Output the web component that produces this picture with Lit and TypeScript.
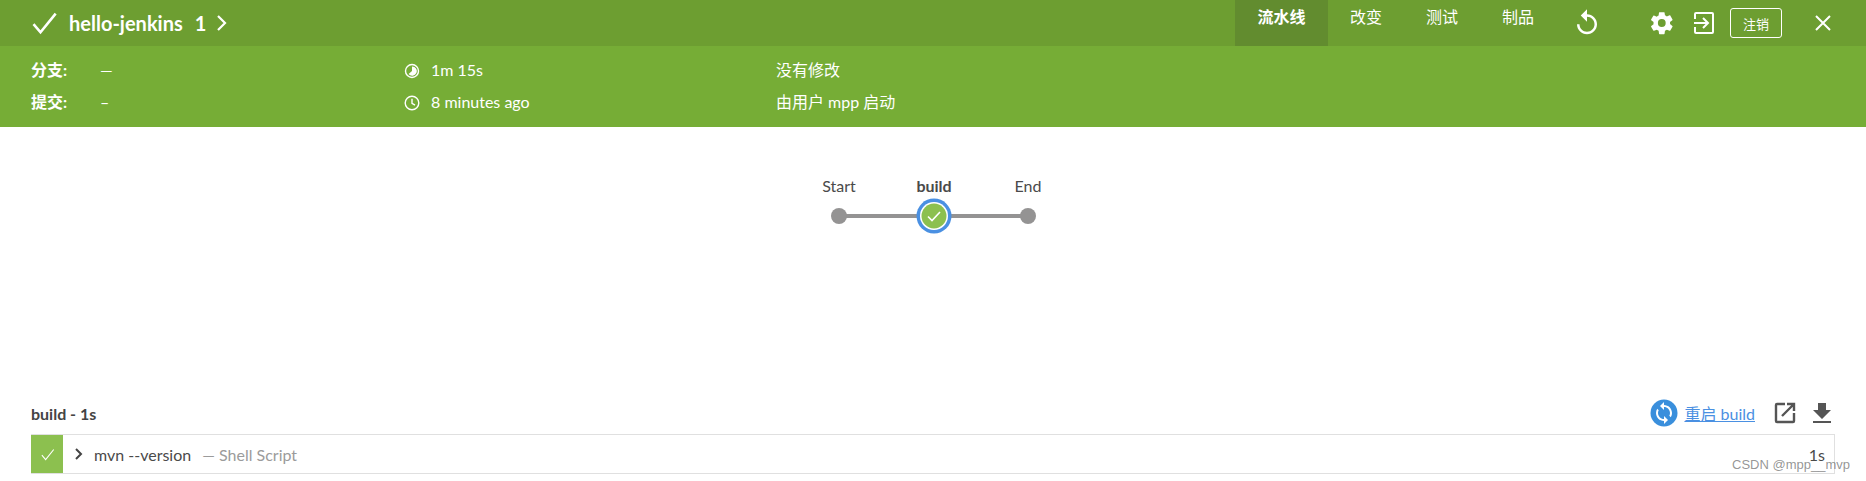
import { LitElement, html, css, svg } from 'lit';
import { customElement } from 'lit/decorators.js';

const check = (size: number, w: number) => html`<svg width=${size} height=${size} viewBox="0 0 24 24" fill="none" stroke="#fff" stroke-width=${w}><path d="M3 13l6 7L22 4"/></svg>`;

@customElement('app-root')
export class AppRoot extends LitElement {
  static styles = css`
    :host {
      display: block;
      position: relative;
      height: 481px;
      overflow: hidden;
      background: #fff;
      font-family: Lato, "Noto Sans CJK SC", sans-serif;
      color: #4a4a4a;
    }
    .top {
      height: 46px;
      background: #6d9e31;
      color: #fff;
      display: flex;
      align-items: center;
      padding-left: 30px;
    }
    .title {
      display: flex;
      align-items: center;
      font-size: 20px;
      font-weight: 700;
      flex: 1;
    }
    .title .name { margin-left: 11px; }
    .title .run { margin-left: 12px; }
    .title svg.chev { margin-left: 10px; }
    .tabs { display: flex; height: 100%; margin-right: 17px; }
    .tab {
      padding: 0 22px;
      font-size: 16px;
      line-height: 34px;
      width: 32px;
      white-space: nowrap;
      display: flex;
      justify-content: center;
    }
    .tab.active {
      width: 49px;
      background: #628c2f;
      font-weight: 700;
    }
    .actions { display: flex; align-items: center; padding-right: 34px; }
    .actions .gear { margin-left: 48px; }
    .actions .exit { margin-left: 18px; }
    .logout {
      width: 52px;
      height: 30px;
      box-sizing: border-box;
      border: 1px solid #fff;
      border-radius: 3px;
      font-size: 13px;
      display: flex;
      align-items: center;
      justify-content: center;
      margin-left: 15px;
      margin-right: 32px;
    }
    .sub {
      height: 81px;
      box-sizing: border-box;
      background: #76ad36;
      color: #fff;
      padding: 7px 0 0 31px;
      display: grid;
      grid-template-columns: 373px 372px 1fr;
      grid-auto-rows: 32px;
      font-size: 16px;
      align-items: center;
    }
    .kv { display: flex; align-items: center; }
    .kv b { width: 69px; font-weight: 700; }
    .meta { display: flex; align-items: center; gap: 11px; }
    .meta svg { margin-top: 3px; }
    .graph { height: 200px; display: flex; justify-content: center; }
    .graph text { font-family: Lato, sans-serif; font-size: 16px; fill: #4a4a4a; text-anchor: middle; }
    .graph text.sel { font-weight: 700; }
    .head {
      display: flex;
      align-items: center;
      height: 40px;
      padding: 0 34px 0 31px;
      margin-top: 66px;
      margin-bottom: 1px;
      box-sizing: border-box;
      font-size: 16px;
    }
    .head .stage { font-weight: 700; flex: 1; color: #444; }
    .head a { color: #4a90e2; text-decoration: underline; margin: 0 19px 0 6px; }
    .head svg.dl { margin-left: 16px; }
    .step {
      margin: 0 31px;
      height: 38px;
      border: 1px solid #e0e0e0;
      border-left: none;
      display: flex;
      align-items: center;
      font-size: 16px;
    }
    .ok {
      width: 32px;
      height: 38px;
      background: #8cc04f;
      display: flex;
      align-items: center;
      justify-content: center;
    }
    .step .chev { margin-left: 11px; }
    .step .cmd { margin-left: 11px; }
    .step .kind { margin-left: 11px; color: #9b9b9b; flex: 1; }
    .step .time { margin-right: 9px; }
    .mark {
      position: absolute;
      right: 16px;
      top: 457px;
      font: 13px "Liberation Sans", sans-serif;
      color: rgba(90, 90, 90, 0.65);
    }
  `;

  render() {
    return html`
      <div class="top">
        <div class="title">
          ${check(28, 2.2)}
          <span class="name">hello-jenkins</span>
          <span class="run">1</span>
          <svg class="chev" width="11" height="18" viewBox="0 0 11 18" fill="none" stroke="#fff" stroke-width="2.2"><path d="M2 2l7 7-7 7"/></svg>
        </div>
        <div class="tabs">
          <div class="tab active">流水线</div>
          <div class="tab">改变</div>
          <div class="tab">测试</div>
          <div class="tab">制品</div>
        </div>
        <div class="actions">
          <svg width="28" height="30" viewBox="2 0 20 24" fill="#fff"><path d="M12 5V1L7 6l5 5V7c3.31 0 6 2.69 6 6s-2.69 6-6 6-6-2.69-6-6H4c0 4.42 3.58 8 8 8s8-3.58 8-8-3.58-8-8-8z"/></svg>
          <svg class="gear" width="26" height="26" viewBox="0 0 24 24" fill="#fff"><path d="M19.4 13c.04-.33.06-.66.06-1s-.02-.67-.07-1l2.16-1.65c.2-.15.25-.42.13-.64l-2.05-3.55c-.13-.22-.39-.3-.62-.22l-2.55 1.02c-.53-.4-1.1-.74-1.73-1l-.38-2.7A.5.5 0 0 0 13.85 2h-4.1a.5.5 0 0 0-.5.42l-.38 2.71c-.63.26-1.2.6-1.73 1L4.6 5.1a.5.5 0 0 0-.61.22L1.94 8.87c-.13.22-.07.49.13.64L4.23 11.16c-.05.33-.08.67-.08 1s.03.67.07 1l-2.15 1.65c-.2.15-.25.42-.13.64l2.05 3.55c.13.22.39.3.62.22l2.55-1.02c.53.4 1.1.74 1.73 1l.38 2.7c.05.24.25.42.5.42h4.1c.25 0 .46-.18.5-.42l.38-2.7c.63-.27 1.2-.6 1.73-1l2.55 1.02c.23.09.49 0 .62-.22l2.05-3.55c.12-.22.07-.49-.13-.64zM11.8 15.6a3.6 3.6 0 1 1 0-7.2 3.6 3.6 0 0 1 0 7.2z"/></svg>
          <svg class="exit" width="22" height="24" viewBox="0 0 22 24" fill="none" stroke="#fff" stroke-width="2"><path d="M2 8V3a1 1 0 0 1 1-1h16a1 1 0 0 1 1 1v18a1 1 0 0 1-1 1H3a1 1 0 0 1-1-1v-5"/><path d="M1 12h13M10 7l5 5-5 5"/></svg>
          <div class="logout">注销</div>
          <svg width="18" height="18" viewBox="0 0 18 18" fill="none" stroke="#fff" stroke-width="2"><path d="M2 2l14 14M16 2L2 16"/></svg>
        </div>
      </div>

      <div class="sub">
        <div class="kv"><b>分支:</b><span>—</span></div>
        <div class="meta">
          <svg width="16" height="16" viewBox="0 0 16 16"><circle cx="8" cy="8" r="6.5" fill="none" stroke="#fff" stroke-width="1.4"/><path d="M8 3.5v4.6L4.6 11a4.6 4.6 0 1 0 3.4-7.5z" fill="#fff"/></svg>
          <span>1m 15s</span>
        </div>
        <div>没有修改</div>
        <div class="kv"><b>提交:</b><span>–</span></div>
        <div class="meta">
          <svg width="16" height="16" viewBox="0 0 16 16" fill="none" stroke="#fff" stroke-width="1.4"><circle cx="8" cy="8" r="6.8"/><path d="M8 3.8V8.4l3 1.8"/></svg>
          <span>8 minutes ago</span>
        </div>
        <div>由用户 mpp 启动</div>
      </div>

      <div class="graph">
        <svg width="260" height="200" viewBox="3 0 260 200">
          ${svg`
            <text x="39" y="65">Start</text>
            <text class="sel" x="134" y="65">build</text>
            <text x="228" y="65">End</text>
            <path d="M39 89H228" stroke="#949393" stroke-width="4"/>
            <circle cx="39" cy="89" r="8" fill="#949393"/>
            <circle cx="228" cy="89" r="8" fill="#949393"/>
            <circle cx="134" cy="89" r="17.5" fill="#4a90e2"/>
            <circle cx="134" cy="89" r="14" fill="#fff"/>
            <circle cx="134" cy="89" r="12.5" fill="#8cc04f"/>
            <path d="M128 89.5l4 4 8-8.5" fill="none" stroke="#fff" stroke-width="1.6"/>
          `}
        </svg>
      </div>

      <div class="head">
        <span class="stage">build - 1s</span>
        <svg width="28" height="28" viewBox="0 0 28 28"><circle cx="14" cy="14" r="13.5" fill="#3a8fdc"/><path transform="translate(2 2)" fill="#fff" d="M12 4V1L8 5l4 4V6c3.31 0 6 2.69 6 6 0 1.01-.25 1.97-.7 2.8l1.46 1.46C19.54 15.03 20 13.57 20 12c0-4.42-3.58-8-8-8zm0 14c-3.31 0-6-2.69-6-6 0-1.01.25-1.97.7-2.8L5.24 7.74C4.46 8.97 4 10.43 4 12c0 4.42 3.58 8 8 8v3l4-4-4-4v3z"/></svg>
        <a>重启 build</a>
        <svg width="22" height="22" viewBox="0 0 22 22" fill="none" stroke="#555" stroke-width="2.4"><path d="M11 2H3a1 1 0 0 0-1 1v16a1 1 0 0 0 1 1h16a1 1 0 0 0 1-1v-8"/><path d="M8 14L20 2M13 2h7v7"/></svg>
        <svg class="dl" width="20" height="22" viewBox="0 0 20 22" fill="#555"><path d="M6 1h8v7h5l-9 9-9-9h5z"/><path d="M1 19h18v2H1z"/></svg>
      </div>

      <div class="step">
        <div class="ok">${check(15, 1.8)}</div>
        <svg class="chev" width="9" height="12" viewBox="0 0 9 12" fill="none" stroke="#444" stroke-width="2"><path d="M2 1l5 5-5 5"/></svg>
        <span class="cmd">mvn --version</span>
        <span class="kind">— Shell Script</span>
        <span class="time">1s</span>
      </div>

      <div class="mark">CSDN @mpp__mvp</div>
    `;
  }
}
